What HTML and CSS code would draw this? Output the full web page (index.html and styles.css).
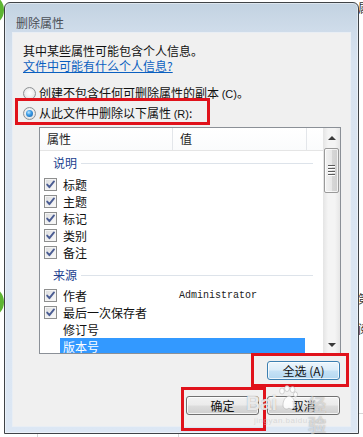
FILE: index.html
```html
<!DOCTYPE html>
<html lang="zh-CN">
<head>
<meta charset="utf-8">
<title>删除属性</title>
<link rel="stylesheet" href="styles.css">
</head>
<body>
<div class="bg-blob blob-top"></div>
<div class="bg-blob blob-mid"></div>
<div class="bg-strip">
  <div class="bg-text bg-text-top">属</div>
  <div class="bg-text bg-text-mid">第<br>阅</div>
</div>
<div class="bg-line bg-line-h"></div>
<div class="bg-line bg-line-v1"></div>
<div class="bg-line bg-line-v2"></div>

<div class="window">
  <div class="titlebar">删除属性</div>
  <div class="panel">
    <p class="info">其中某些属性可能包含个人信息。<br><a class="link">文件中可能有什么个人信息?</a></p>
    <div class="radio-row first"><span class="radio"></span><span class="radio-label">创建不包含任何可删除属性的副本 <span class="acc">(C)</span>。</span></div>
    <div class="radio-row second"><span class="radio checked"></span><span class="radio-label">从此文件中删除以下属性 <span class="acc">(R)</span>:</span></div>

    <div class="listbox">
      <div class="list-main">
        <div class="list-header">
          <div class="hcell col-name">属性</div>
          <div class="hcell col-value">值</div>
          <div class="hcell col-rest"></div>
        </div>

        <div class="group"><span class="group-title">说明</span><span class="group-line"></span></div>
        <div class="items first-items">
          <div class="item"><span class="cb"><svg viewBox="0 0 11 11" width="11" height="11"><path d="M2.2 5.6 L4.4 8.2 L9 2.4" fill="none" stroke="#4b5d93" stroke-width="1.9" stroke-linecap="round" stroke-linejoin="round"/></svg></span><div class="row-body"><span class="name">标题</span><span class="value"></span></div></div>
          <div class="item"><span class="cb"><svg viewBox="0 0 11 11" width="11" height="11"><path d="M2.2 5.6 L4.4 8.2 L9 2.4" fill="none" stroke="#4b5d93" stroke-width="1.9" stroke-linecap="round" stroke-linejoin="round"/></svg></span><div class="row-body"><span class="name">主题</span><span class="value"></span></div></div>
          <div class="item"><span class="cb"><svg viewBox="0 0 11 11" width="11" height="11"><path d="M2.2 5.6 L4.4 8.2 L9 2.4" fill="none" stroke="#4b5d93" stroke-width="1.9" stroke-linecap="round" stroke-linejoin="round"/></svg></span><div class="row-body"><span class="name">标记</span><span class="value"></span></div></div>
          <div class="item"><span class="cb"><svg viewBox="0 0 11 11" width="11" height="11"><path d="M2.2 5.6 L4.4 8.2 L9 2.4" fill="none" stroke="#4b5d93" stroke-width="1.9" stroke-linecap="round" stroke-linejoin="round"/></svg></span><div class="row-body"><span class="name">类别</span><span class="value"></span></div></div>
          <div class="item"><span class="cb"><svg viewBox="0 0 11 11" width="11" height="11"><path d="M2.2 5.6 L4.4 8.2 L9 2.4" fill="none" stroke="#4b5d93" stroke-width="1.9" stroke-linecap="round" stroke-linejoin="round"/></svg></span><div class="row-body"><span class="name">备注</span><span class="value"></span></div></div>
        </div>

        <div class="group second-group"><span class="group-title">来源</span><span class="group-line"></span></div>
        <div class="items">
          <div class="item"><span class="cb"><svg viewBox="0 0 11 11" width="11" height="11"><path d="M2.2 5.6 L4.4 8.2 L9 2.4" fill="none" stroke="#4b5d93" stroke-width="1.9" stroke-linecap="round" stroke-linejoin="round"/></svg></span><div class="row-body"><span class="name">作者</span><span class="value mono">Administrator</span></div></div>
          <div class="item"><span class="cb"><svg viewBox="0 0 11 11" width="11" height="11"><path d="M2.2 5.6 L4.4 8.2 L9 2.4" fill="none" stroke="#4b5d93" stroke-width="1.9" stroke-linecap="round" stroke-linejoin="round"/></svg></span><div class="row-body"><span class="name">最后一次保存者</span><span class="value"></span></div></div>
          <div class="item"><span class="cb-empty"></span><div class="row-body"><span class="name">修订号</span><span class="value"></span></div></div>
          <div class="item"><span class="cb-empty"></span><div class="row-body selected"><span class="name">版本号</span><span class="value"></span></div></div>
        </div>
      </div>

      <div class="scrollbar">
        <div class="sb-btn"><span class="arrow-up"></span></div>
        <div class="sb-track">
          <div class="sb-thumb"><span class="grip"></span><span class="grip"></span><span class="grip"></span><span class="grip"></span></div>
        </div>
        <div class="sb-btn bottom"><span class="arrow-down"></span></div>
      </div>
    </div>

    <div class="btn-row first-row"><button class="btn default">全选 (A)</button></div>
    <div class="btn-row second-row"><button class="btn">确定</button><button class="btn">取消</button></div>
  </div>
</div>

<div class="mark mark-radio"></div>
<div class="mark mark-all"></div>
<div class="mark mark-ok"></div>

<div class="watermark">
  <span class="wm-bai">Bai</span>
  <svg class="wm-paw" width="20" height="26" viewBox="0 0 20 26">
    <g fill="#ffffff" fill-opacity="0.85" stroke="#9a9a9a" stroke-opacity="0.5" stroke-width="0.8">
      <ellipse cx="4" cy="6" rx="2.4" ry="3"/>
      <ellipse cx="9" cy="3.5" rx="2.4" ry="3"/>
      <ellipse cx="14.5" cy="4.5" rx="2.4" ry="3"/>
      <ellipse cx="17.5" cy="9.5" rx="2" ry="2.6"/>
      <path d="M5 20 C5 14 9 11 11 11 C14 11 17 15 17 20 C17 24 13 25 11 23 C9 25 5 24 5 20 Z"/>
    </g>
  </svg>
  <span class="wm-jy">经验</span>
  <div class="wm-url">jingyan.baidu.com</div>
</div>
</body>
</html>
```
FILE: styles.css
```css
html, body {
  margin: 0;
  padding: 0;
}
body {
  width: 363px;
  height: 437px;
  background: #ffffff;
  position: relative;
  overflow: hidden;
  font-family: "Noto Sans CJK SC", "Noto Sans", sans-serif;
  font-size: 12px;
  color: #1b1b1b;
}

/* background page fragments */
.bg-blob {
  position: absolute;
  width: 32px;
  height: 32px;
  border-radius: 50%;
  background: #5db532;
}
.blob-top { left: -28px; top: -6px; }
.blob-mid { left: -28px; top: 286px; }
.bg-strip {
  position: absolute;
  left: 358px;
  top: 0;
  width: 5px;
  height: 437px;
  overflow: hidden;
}
.bg-text {
  position: absolute;
  left: 0;
  font-size: 12px;
  line-height: 16px;
  color: #333;
}
.bg-text-top { top: 0; }
.bg-text-mid { top: 284px; line-height: 30px; }
.bg-line { position: absolute; background: #d6d6d6; }
.bg-line-h { left: 359px; top: 413px; width: 10px; height: 1px; }
.bg-line-v1 { left: 37px; top: 434px; width: 1px; height: 3px; }
.bg-line-v2 { left: 178px; top: 434px; width: 1px; height: 3px; }

/* window */
.window {
  position: relative;
  margin: 2px 0 0 4px;
  width: 353px;
  height: 430px;
  border: 1px solid #3f4347;
  border-radius: 6px 6px 0 0;
  background: linear-gradient(#c2d2e1 0px, #cfdcea 28px, #d8e3f0 60px, #dce7f4 100%);
  box-shadow: inset 0 0 0 1px rgba(255, 255, 255, 0.45);
}
.titlebar {
  height: 29px;
  box-sizing: border-box;
  padding: 12px 0 0 11px;
  line-height: 16px;
  font-size: 12px;
  color: #4a4f56;
}
.panel {
  margin: 0 7px;
  width: 339px;
  height: 395px;
  box-sizing: border-box;
  background: #f0f0f0;
  border: 1px solid #e9eef4;
  padding-top: 10px;
}
.info {
  margin: 0;
  padding-left: 10px;
  line-height: 15px;
  color: #111;
}
.link {
  color: #0a5fc0;
  text-decoration: underline;
}

.radio-row {
  display: flex;
  align-items: center;
  height: 16px;
  padding-left: 10px;
  color: #111;
}
.radio-row.first { margin-top: 12px; }
.radio-row.second { margin-top: 4px; }
.radio {
  width: 11px;
  height: 11px;
  border-radius: 50%;
  border: 1px solid #8f9295;
  background: radial-gradient(circle at 50% 45%, #ffffff 0%, #f1f1f1 45%, #cfd1d3 100%);
  margin-right: 3px;
  position: relative;
  flex: none;
}
.radio.checked::after {
  content: "";
  position: absolute;
  left: 2px;
  top: 2px;
  width: 7px;
  height: 7px;
  border-radius: 50%;
  background: radial-gradient(circle at 40% 35%, #bfe6ff 0%, #3d9de6 40%, #0d5aa6 100%);
}
.radio-label { line-height: 16px; white-space: nowrap; }
.acc {
  font-family: "Liberation Sans", sans-serif;
  font-size: 11px;
}

/* list view */
.listbox {
  margin: 6px 0 0 26px;
  width: 300px;
  height: 225px;
  border: 1px solid #8b9097;
  background: #ffffff;
  display: flex;
  overflow: hidden;
}
.list-main {
  width: 283px;
  flex: none;
  overflow: hidden;
}
.list-header {
  display: flex;
  height: 22px;
  border-bottom: 1px solid #e5e5e5;
  background: linear-gradient(#ffffff, #fafbfc);
}
.hcell {
  box-sizing: border-box;
  line-height: 22px;
  padding-left: 7px;
  color: #1e1e1e;
  border-right: 1px solid #e3e6ea;
}
.col-name { width: 133px; }
.col-value { width: 134px; }
.col-rest { flex: 1; border-right: none; }

.group {
  display: flex;
  align-items: center;
  height: 24px;
  padding-left: 13px;
  padding-right: 10px;
}
.second-group { margin-top: 2px; }
.group-title {
  color: #213f8f;
  line-height: 16px;
}
.group-line {
  flex: 1;
  height: 1px;
  background: #dde3ea;
  margin-left: 4px;
}
.items.first-items { margin-top: 1px; }
.item {
  display: flex;
  align-items: center;
  height: 17px;
  padding-left: 4px;
}
.cb, .cb-empty {
  width: 13px;
  height: 13px;
  box-sizing: border-box;
  flex: none;
}
.cb {
  border: 1px solid #8e8f8f;
  background: linear-gradient(135deg, #d8d9da 0%, #ededee 50%, #fbfbfb 100%);
  box-shadow: inset 0 0 0 1px #f4f4f4;
  display: flex;
  align-items: center;
  justify-content: center;
}
.cb svg { display: block; }
.row-body {
  flex: none;
  width: 245px;
  margin-left: 3px;
  height: 17px;
  display: grid;
  grid-template-columns: 112px 1fr;
  line-height: 17px;
  color: #111;
}
.name { padding-left: 3px; white-space: nowrap; }
.value { padding-left: 7px; }
.mono {
  font-family: "Liberation Mono", "DejaVu Sans Mono", monospace;
  font-size: 10px;
  color: #222;
}
.row-body.selected {
  background: #3399ff;
  color: #ffffff;
}

/* scrollbar */
.scrollbar {
  width: 17px;
  flex: none;
  display: flex;
  flex-direction: column;
  background: linear-gradient(90deg, #e4e4e4, #f4f4f4 30%, #f4f4f4 70%, #e6e6e6);
}
.sb-btn {
  height: 17px;
  flex: none;
  display: flex;
  align-items: center;
  justify-content: center;
}
.arrow-up {
  width: 0;
  height: 0;
  border-left: 4px solid transparent;
  border-right: 4px solid transparent;
  border-bottom: 4px solid #3a3a3a;
  margin-top: 2px;
}
.arrow-down {
  width: 0;
  height: 0;
  border-left: 4px solid transparent;
  border-right: 4px solid transparent;
  border-top: 4px solid #3a3a3a;
}
.sb-track {
  flex: 1;
  padding-top: 3px;
}
.sb-thumb {
  margin: 0 1px 0 1px;
  height: 45px;
  box-sizing: border-box;
  border: 1px solid #9a9a9a;
  border-radius: 2px;
  background: linear-gradient(90deg, #f2f2f2, #e8e8e8 50%, #d7d7d7 51%, #cfcfcf);
  box-shadow: inset 0 0 0 1px rgba(255, 255, 255, 0.7);
  display: flex;
  flex-direction: column;
  align-items: center;
  justify-content: center;
  gap: 1px;
}
.grip {
  width: 7px;
  height: 1px;
  background: #5c5c5c;
  border-bottom: 1px solid #ffffff;
}

/* buttons */
.btn-row {
  display: flex;
  justify-content: flex-end;
  gap: 8px;
  padding-right: 10px;
}
.btn-row.first-row { margin-top: 7px; }
.btn-row.second-row { margin-top: 16px; }
.btn {
  width: 73px;
  height: 19px;
  padding: 0;
  margin: 0;
  border: 1px solid #707070;
  border-radius: 3px;
  background: linear-gradient(#f2f2f2 0%, #ebebeb 48%, #dddddd 52%, #cfcfcf 100%);
  box-shadow: inset 0 0 0 1px rgba(255, 255, 255, 0.75);
  font-family: "Noto Sans CJK SC", "Noto Sans", sans-serif;
  font-size: 12px;
  line-height: 17px;
  color: #111;
}
.btn.default {
  border-color: #3c7fb1;
  background: linear-gradient(#edf6fc 0%, #dcedf9 48%, #c6e2f6 52%, #b4d7f0 100%);
}

/* red annotation boxes drawn over the screenshot */
.mark {
  position: absolute;
  border: 3px solid #e0121b;
  box-sizing: border-box;
}
.mark-radio { left: 15px; top: 98px; width: 195px; height: 27px; }
.mark-all { left: 251px; top: 353px; width: 98px; height: 34px; }
.mark-ok { left: 181px; top: 387px; width: 85px; height: 44px; }

/* watermark */
.watermark {
  position: absolute;
  left: 246px;
  top: 383px;
  width: 95px;
  height: 45px;
  pointer-events: none;
}
.wm-bai {
  position: absolute;
  left: 0;
  top: 9px;
  font-family: "Liberation Sans", sans-serif;
  font-weight: bold;
  font-size: 20px;
  line-height: 22px;
  color: rgba(255, 255, 255, 0.8);
  text-shadow: 0 0 1px rgba(90, 90, 90, 0.6);
}
.wm-paw {
  position: absolute;
  left: 32px;
  top: 2px;
}
.wm-jy {
  position: absolute;
  left: 62px;
  top: 11px;
  font-size: 18px;
  line-height: 20px;
  font-weight: bold;
  color: rgba(255, 255, 255, 0.55);
  text-shadow: 0 0 1px rgba(90, 90, 90, 0.5);
}
.wm-url {
  position: absolute;
  left: 8px;
  top: 33px;
  font-family: "Liberation Sans", sans-serif;
  font-size: 8px;
  line-height: 10px;
  color: rgba(200, 200, 200, 0.6);
  letter-spacing: 0.5px;
}
```
